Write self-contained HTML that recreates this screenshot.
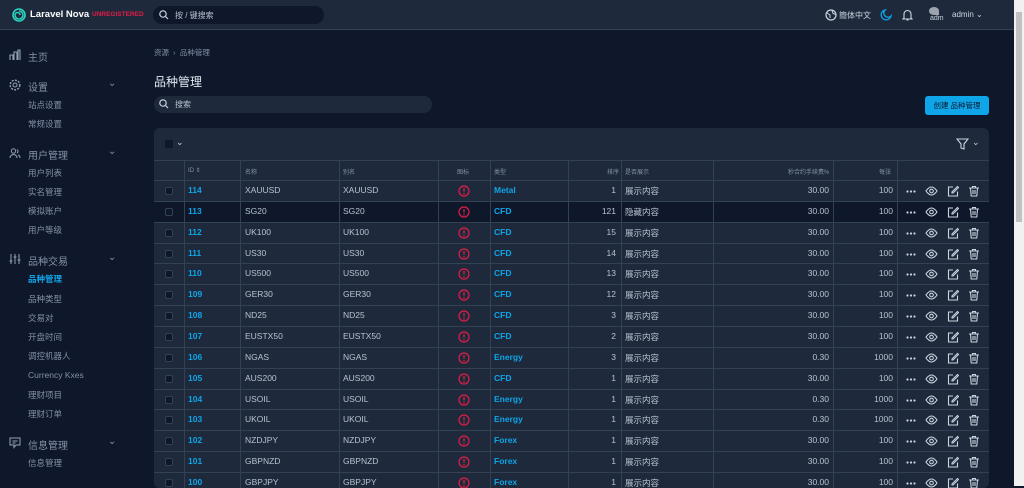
<!DOCTYPE html>
<html><head><meta charset="utf-8"><style>
*{box-sizing:border-box;margin:0;padding:0}
body{width:1024px;height:486px;overflow:hidden;background:#0f172a;font-family:"Liberation Sans","Noto Sans CJK SC",sans-serif;color:#cbd5e1;position:relative}
.hdr{position:absolute;left:0;top:0;width:1014px;height:30px;background:#1e293b;border-bottom:1px solid #334155}
.sb{position:absolute;right:0;top:0;width:10px;height:486px;background:#f1f1f1}
.sb div{position:absolute;left:2px;top:12px;width:6px;height:210px;background:#c1c1c1}
.abs{position:absolute;white-space:nowrap}
.side{font-size:8.5px;color:#8391a7}
.sec{font-size:10px;color:#8391a7}
.tbl{position:absolute;left:154px;top:128px;width:835px;height:360px;background:#1e293b;border-radius:6px;overflow:hidden}
.row{position:absolute;left:0;width:835px;height:20.86px;border-top:1px solid #334155;font-size:8.5px;color:#b8c2d0}
.row span{position:absolute;top:4px}
.c{position:absolute;top:0;width:1px;height:100%;background:#334155}
.blue{color:#0ea5e9;font-weight:bold}
.cb{position:absolute;left:11px;top:6px;width:8px;height:8px;background:#0f172a;border:1px solid #334155;border-radius:2px}
.ic{position:absolute;top:4px}
</style></head><body>
<div class="hdr"></div>
<svg class="abs" style="left:12px;top:8px" width="14" height="14" viewBox="0 0 14 14"><circle cx="7" cy="7" r="6" fill="none" stroke="#2dd4bf" stroke-width="1.6"/><path d="M7 3a4 4 0 1 1-4 4a2.5 2.5 0 0 1 5 0" fill="none" stroke="#2dd4bf" stroke-width="1.5"/></svg>
<div class="abs" style="left:30px;top:9px;font-size:9.5px;color:#fff;font-weight:bold">Laravel Nova</div>
<div class="abs" style="left:92px;top:11px;font-size:6.5px;color:#e11d48;font-weight:bold">UNREGISTERED</div>
<div class="abs" style="left:153px;top:6px;width:171px;height:18px;background:#0f172a;border-radius:9px"></div>
<svg class="abs" style="left:159px;top:10px" width="10" height="10"><circle cx="4" cy="4" r="3.2" fill="none" stroke="#cbd5e1" stroke-width="1.2"/><path d="M6.5 6.5L9 9" stroke="#cbd5e1" stroke-width="1.2"/></svg>
<div class="abs" style="left:175px;top:10px;font-size:8px;color:#b8c2d0">按 / 键搜索</div>
<svg class="abs" style="left:825px;top:9px" width="12" height="12"><circle cx="6" cy="6" r="5" fill="none" stroke="#cbd5e1" stroke-width="1.2"/><path d="M2 4l3 2v3M7 1.5l1 3 3 1" fill="none" stroke="#cbd5e1"/></svg>
<div class="abs" style="left:839px;top:10px;font-size:8px;color:#cbd5e1">簡体中文</div>
<svg class="abs" style="left:880px;top:9px" width="12" height="12"><path d="M5 1a5 5 0 1 0 6 6a4 4 0 0 1-6-6z" fill="none" stroke="#0ea5e9" stroke-width="1.3"/></svg>
<svg class="abs" style="left:902px;top:9px" width="11" height="12"><path d="M2 9V5a3.5 3.5 0 0 1 7 0v4l1 1H1zM4.5 11h2" fill="none" stroke="#cbd5e1" stroke-width="1.1"/></svg>
<div class="abs" style="left:929px;top:7px;width:10px;height:8px;background:#9ca3af;border-radius:50% 50% 0 50%"></div>
<div class="abs" style="left:930px;top:15px;font-size:7px;color:#cbd5e1">adm</div>
<div class="abs" style="left:952px;top:10px;font-size:8px;color:#cbd5e1">admin ⌄</div>

<svg class="abs" style="left:9px;top:49px" width="12" height="12"><path d="M1 11V6h3v5M5 11V3h3v8M9 11V1h2v10" fill="none" stroke="#94a3b8" stroke-width="1.1"/></svg>
<div class="abs sec" style="left:28px;top:49px">主页</div>
<svg class="abs" style="left:9px;top:79px" width="12" height="12"><circle cx="6" cy="6" r="2" fill="none" stroke="#94a3b8"/><circle cx="6" cy="6" r="4.8" fill="none" stroke="#94a3b8" stroke-dasharray="2 1.2" stroke-width="1.4"/></svg>
<div class="abs sec" style="left:28px;top:79px">设置</div><div class="abs sec" style="left:108px;top:78px">⌄</div>
<div class="abs side" style="left:28px;top:99px">站点设置</div>
<div class="abs side" style="left:28px;top:118px">常规设置</div>
<svg class="abs" style="left:9px;top:147px" width="12" height="12"><circle cx="4.5" cy="4" r="2.2" fill="none" stroke="#94a3b8"/><path d="M1 11a3.5 3.5 0 0 1 7 0M8 2.5a2 2 0 0 1 0 3.5M9 8a3 3 0 0 1 2 3" fill="none" stroke="#94a3b8"/></svg>
<div class="abs sec" style="left:28px;top:147px">用户管理</div><div class="abs sec" style="left:108px;top:146px">⌄</div>
<div class="abs side" style="left:28px;top:167px">用户列表</div>
<div class="abs side" style="left:28px;top:186px">实名管理</div>
<div class="abs side" style="left:28px;top:205px">模拟账户</div>
<div class="abs side" style="left:28px;top:224px">用户等级</div>
<svg class="abs" style="left:9px;top:253px" width="12" height="12"><path d="M2 1v10M6 1v10M10 1v10M0.5 8h3M4.5 4h3M8.5 7h3" stroke="#94a3b8"/></svg>
<div class="abs sec" style="left:28px;top:253px">品种交易</div><div class="abs sec" style="left:108px;top:252px">⌄</div>
<div class="abs side" style="left:28px;top:273px;color:#0ea5e9;font-weight:bold">品种管理</div>
<div class="abs side" style="left:28px;top:293px">品种类型</div>
<div class="abs side" style="left:28px;top:312px">交易对</div>
<div class="abs side" style="left:28px;top:331px">开盘时间</div>
<div class="abs side" style="left:28px;top:350px">调控机器人</div>
<div class="abs side" style="left:28px;top:370px">Currency Kxes</div>
<div class="abs side" style="left:28px;top:389px">理财项目</div>
<div class="abs side" style="left:28px;top:408px">理财订单</div>
<svg class="abs" style="left:9px;top:437px" width="12" height="12"><path d="M1 1h10v7H7l-2 2.5V8H1zM3.5 4h5M3.5 6h3" fill="none" stroke="#94a3b8"/></svg>
<div class="abs sec" style="left:28px;top:437px">信息管理</div><div class="abs sec" style="left:108px;top:436px">⌄</div>
<div class="abs side" style="left:28px;top:457px">信息管理</div>

<div class="abs" style="left:154px;top:47px;font-size:7.5px;color:#8391a7">资源 &nbsp;›&nbsp; 品种管理</div>
<div class="abs" style="left:154px;top:73px;font-size:12px;color:#e2e8f0">品种管理</div>
<div class="abs" style="left:154px;top:96px;width:278px;height:17px;background:#1e293b;border-radius:9px"></div>
<svg class="abs" style="left:159px;top:99px" width="10" height="10"><circle cx="4" cy="4" r="3.2" fill="none" stroke="#cbd5e1" stroke-width="1.2"/><path d="M6.5 6.5L9 9" stroke="#cbd5e1" stroke-width="1.2"/></svg>
<div class="abs" style="left:175px;top:99px;font-size:8px;color:#b8c2d0">搜索</div>
<div class="abs" style="left:925px;top:96px;width:64px;height:19px;background:#0ea5e9;border-radius:3px;color:#0f172a;font-size:7.5px;text-align:center;line-height:19px">创建 品种管理</div>

<div class="tbl">
<div class="abs" style="left:11px;top:12px;width:8px;height:8px;background:#0f172a;border-radius:2px"></div>
<div class="abs" style="left:22px;top:9px;font-size:9px;color:#cbd5e1">⌄</div>
<svg class="abs" style="left:802px;top:10px" width="13" height="12"><path d="M1 1h11L8 6v5L5 10V6z" fill="none" stroke="#cbd5e1" stroke-width="1.1"/></svg>
<div class="abs" style="left:818px;top:9px;font-size:9px;color:#cbd5e1">⌄</div>
<div class="row" style="top:32px;height:20px;font-size:6px;color:#8391a7;background:#1e293b">
<span style="left:34px;top:6px">ID ⇕</span><span style="left:91px;top:6px">名称</span><span style="left:189px;top:6px">别名</span><span style="left:303px;top:6px">图标</span><span style="left:340px;top:6px">类型</span><span style="left:453px;top:6px">排序</span><span style="left:471px;top:6px">是否展示</span><span style="left:634px;top:6px">秒合约手续费%</span><span style="left:725px;top:6px">每张</span>
</div>
<div id="rows"></div>
<div class="c" style="left:30px;top:32px;height:330px"></div><div class="c" style="left:86px;top:32px;height:330px"></div><div class="c" style="left:185px;top:32px;height:330px"></div><div class="c" style="left:284px;top:32px;height:330px"></div><div class="c" style="left:336px;top:32px;height:330px"></div><div class="c" style="left:414px;top:32px;height:330px"></div><div class="c" style="left:467px;top:32px;height:330px"></div><div class="c" style="left:559px;top:32px;height:330px"></div><div class="c" style="left:679px;top:32px;height:330px"></div><div class="c" style="left:743px;top:32px;height:330px"></div>
</div>
<div class="sb"><div></div></div>
<script>
var d=[[114,'XAUUSD','Metal',1,'展示内容','30.00',100],[113,'SG20','CFD',121,'隐藏内容','30.00',100],[112,'UK100','CFD',15,'展示内容','30.00',100],[111,'US30','CFD',14,'展示内容','30.00',100],[110,'US500','CFD',13,'展示内容','30.00',100],[109,'GER30','CFD',12,'展示内容','30.00',100],[108,'ND25','CFD',3,'展示内容','30.00',100],[107,'EUSTX50','CFD',2,'展示内容','30.00',100],[106,'NGAS','Energy',3,'展示内容','0.30',1000],[105,'AUS200','CFD',1,'展示内容','30.00',100],[104,'USOIL','Energy',1,'展示内容','0.30',1000],[103,'UKOIL','Energy',1,'展示内容','0.30',1000],[102,'NZDJPY','Forex',1,'展示内容','30.00',100],[101,'GBPNZD','Forex',1,'展示内容','30.00',100],[100,'GBPJPY','Forex',1,'展示内容','30.00',100]];
var h='';
d.forEach(function(r,i){
var top=52+i*20.86,bg=i==1?'#0f172a':'#1e293b',cb=i==1?'background:transparent':'';
h+='<div class="row" style="top:'+top+'px;background:'+bg+'"><div class="cb" style="'+cb+'"></div>'+
'<span class="blue" style="left:34px">'+r[0]+'</span><span style="left:91px">'+r[1]+'</span><span style="left:189px">'+r[1]+'</span>'+
'<svg class="ic" style="left:304px" width="12" height="12"><circle cx="6" cy="6" r="5" fill="none" stroke="#e11d48" stroke-width="1.2"/><path d="M6 3v3.5" stroke="#e11d48" stroke-width="1.3"/><circle cx="6" cy="8.7" r=".8" fill="#e11d48"/></svg>'+
'<span class="blue" style="left:340px">'+r[2]+'</span><span style="right:373px">'+r[3]+'</span><span style="left:471px">'+r[4]+'</span>'+
'<span style="right:160px">'+r[5]+'</span><span style="right:96px">'+r[6]+'</span>'+
'<svg class="ic" style="left:752px;top:9px" width="10" height="3"><circle cx="1.5" cy="1.5" r="1.1" fill="#cbd5e1"/><circle cx="5" cy="1.5" r="1.1" fill="#cbd5e1"/><circle cx="8.5" cy="1.5" r="1.1" fill="#cbd5e1"/></svg>'+
'<svg class="ic" style="left:771px" width="13" height="12"><path d="M1 6s2.5-4 5.5-4S12 6 12 6s-2.5 4-5.5 4S1 6 1 6z" fill="none" stroke="#cbd5e1" stroke-width="1.1"/><circle cx="6.5" cy="6" r="1.8" fill="none" stroke="#cbd5e1" stroke-width="1.1"/></svg>'+
'<svg class="ic" style="left:793px" width="12" height="12"><path d="M6 2H1.5v9h9V6.5M5 7l5.5-5.5 1 1L6 8H5z" fill="none" stroke="#cbd5e1" stroke-width="1.1"/></svg>'+
'<svg class="ic" style="left:814px" width="12" height="12"><path d="M1 3h10M4.5 3V1.5h3V3M2.5 3l.7 8h5.6l.7-8M5 5v4M7 5v4" fill="none" stroke="#cbd5e1" stroke-width="1.1"/></svg></div>';
});
document.getElementById('rows').innerHTML=h;
</script>
</body></html>
